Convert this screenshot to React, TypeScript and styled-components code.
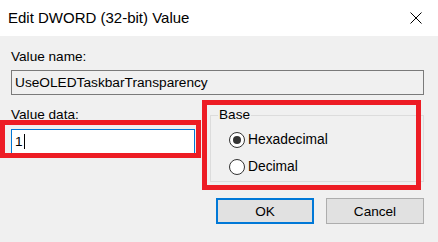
import React from "react";
import styled, { createGlobalStyle } from "styled-components";

const GlobalStyle = createGlobalStyle`
  html, body {
    margin: 0;
    padding: 0;
    background: #f0f0f0;
  }
  * {
    box-sizing: border-box;
  }
`;

const Dialog = styled.div`
  position: relative;
  width: 438px;
  height: 242px;
  background: #f0f0f0;
  font-family: "Liberation Sans", Arial, sans-serif;
  color: #000;
  overflow: hidden;
`;

const TitleBar = styled.div`
  height: 36px;
  background: #fff;
  display: flex;
  align-items: center;
  justify-content: space-between;
  padding: 0 16px 0 8px;
`;

const Title = styled.span`
  font-size: 15px;
  line-height: 20px;
`;

const Body = styled.div`
  padding: 13px 14px 0 11px;
  display: flex;
  flex-direction: column;
`;

const Label = styled.div`
  font-size: 13.6px;
  line-height: 16px;
`;

const TextBox = styled.div<{ $focused?: boolean }>`
  height: 25px;
  display: flex;
  align-items: center;
  padding-left: 3px;
  font-size: 13.7px;
  border: 1px solid ${(p) => (p.$focused ? "#0078d7" : "#7a7a7a")};
  background: ${(p) => (p.$focused ? "#fff" : "#f0f0f0")};
`;

const Caret = styled.span`
  display: inline-block;
  width: 1px;
  height: 15px;
  margin-left: 1px;
  background: #000;
`;

const Row = styled.div`
  display: flex;
  gap: 15px;
  margin-top: 12px;
`;

const DataColumn = styled.div`
  width: 184px;
  display: flex;
  flex-direction: column;
  gap: 6px;
`;

const Group = styled.fieldset`
  flex: 1;
  margin: 0;
  padding: 3px 0 1px 7px;
  border: 1px solid #dcdcdc;
  min-width: 0;
`;

const Legend = styled.legend`
  padding: 0 1px;
  font-size: 13.6px;
  line-height: 16px;
`;

const RadioRow = styled.div`
  height: 27px;
  margin-left: 11px;
  display: flex;
  align-items: center;
  gap: 3px;
  font-size: 13.8px;
`;

const RadioCircle = styled.span<{ $checked?: boolean }>`
  width: 16px;
  height: 16px;
  border-radius: 50%;
  border: 1px solid #333;
  background: #fff;
  display: flex;
  align-items: center;
  justify-content: center;

  &::after {
    content: "";
    width: 8px;
    height: 8px;
    border-radius: 50%;
    background: ${(p) => (p.$checked ? "#333" : "transparent")};
  }
`;

const Buttons = styled.div`
  display: flex;
  justify-content: flex-end;
  gap: 12px;
  margin-top: 16px;
`;

const Button = styled.button<{ $primary?: boolean }>`
  width: 98px;
  height: 26px;
  padding: 0;
  font-family: inherit;
  font-size: 13.6px;
  color: #000;
  background: #e1e1e1;
  border: ${(p) => (p.$primary ? "2px solid #0078d7" : "1px solid #adadad")};
`;

const Highlight = styled.div<{ $x: number; $y: number; $w: number; $h: number }>`
  position: absolute;
  left: ${(p) => p.$x}px;
  top: ${(p) => p.$y}px;
  width: ${(p) => p.$w}px;
  height: ${(p) => p.$h}px;
  border: 5px solid #ed1c24;
  pointer-events: none;
`;

function CloseIcon() {
  return (
    <svg width="12" height="12" viewBox="0 0 12 12">
      <path d="M0.5 0.5 L11.5 11.5 M11.5 0.5 L0.5 11.5" stroke="#000" strokeWidth="1" />
    </svg>
  );
}

function Radio({ label, checked }: { label: string; checked?: boolean }) {
  return (
    <RadioRow>
      <RadioCircle $checked={checked} />
      {label}
    </RadioRow>
  );
}

export default function App() {
  return (
    <>
      <GlobalStyle />
      <Dialog>
        <TitleBar>
          <Title>Edit DWORD (32-bit) Value</Title>
          <CloseIcon />
        </TitleBar>

        <Body>
          <Label>Value name:</Label>
          <TextBox style={{ marginTop: 5 }}>UseOLEDTaskbarTransparency</TextBox>

          <Row>
            <DataColumn>
              <Label>Value data:</Label>
              <TextBox $focused>
                1<Caret />
              </TextBox>
            </DataColumn>

            <Group>
              <Legend>Base</Legend>
              <Radio label="Hexadecimal" checked />
              <Radio label="Decimal" />
            </Group>
          </Row>

          <Buttons>
            <Button $primary>OK</Button>
            <Button>Cancel</Button>
          </Buttons>
        </Body>

        <Highlight $x={0} $y={120} $w={201} $h={38} />
        <Highlight $x={202} $y={100} $w={219} $h={90} />
      </Dialog>
    </>
  );
}
